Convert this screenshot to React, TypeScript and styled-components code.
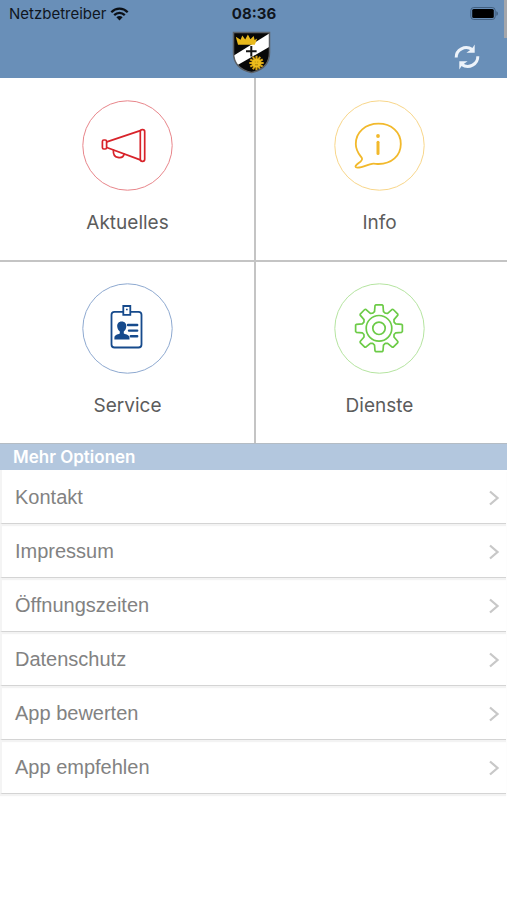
import React from "react";
import styled, { createGlobalStyle } from "styled-components";

const GlobalStyle = createGlobalStyle`
  *, *::before, *::after { box-sizing: border-box; }
  body {
    margin: 0;
    background: #fff;
    font-family: "Liberation Sans", Arial, sans-serif;
  }
`;

const Screen = styled.div`
  position: relative;
  min-height: 100vh;
`;

const Header = styled.header`
  height: 78px;
  background: #698fb8;
`;

const StatusBar = styled.div`
  display: grid;
  grid-template-columns: 1fr auto 1fr;
  align-items: center;
  height: 27px;
  padding: 0 8px 0 9px;
  font-family: Inter, sans-serif;
  font-size: 15px;
  color: #10161e;
`;

const Carrier = styled.div`
  display: flex;
  align-items: center;
  gap: 4px;
`;

const Clock = styled.time`
  font-weight: 700;
`;

const Battery = styled.svg`
  justify-self: end;
`;

const NavBar = styled.div`
  display: grid;
  grid-template-columns: 1fr auto 1fr;
  align-items: center;
  height: 50px;
  padding: 0 27px 0 23px;
`;

const Crest = styled.svg`
  grid-column: 2;
`;

const RefreshButton = styled.button`
  display: flex;
  justify-self: end;
  margin-top: 9px;
  padding: 0;
  border: 0;
  background: none;
  cursor: pointer;
`;

const ScrollThumb = styled.div`
  position: absolute;
  top: 0;
  right: 0;
  width: 3px;
  height: 38px;
  background: #a4a6aa;
`;

const TileGrid = styled.nav`
  display: grid;
  grid-template-columns: 254fr 251fr;
  gap: 2px;
  background: #c4c4c4;
  border-bottom: 1px solid #b4bcc4;
`;

const Tile = styled.a<{ $end?: boolean }>`
  display: flex;
  flex-direction: column;
  align-items: center;
  gap: 18px;
  height: ${(p) => (p.$end ? 181 : 182)}px;
  padding-top: ${(p) => (p.$end ? 21 : 22)}px;
  padding-left: 1px;
  background: #fff;
  color: #5c5c5c;
  font-family: Inter, sans-serif;
  font-size: 19px;
  line-height: 28px;
  text-decoration: none;

  &:nth-child(even) {
    padding-right: 5px;
  }
`;

const SectionTitle = styled.h2`
  margin: 0;
  padding-left: 13px;
  background: #b3c7de;
  color: #fff;
  font-family: Inter, sans-serif;
  font-size: 17px;
  font-weight: 600;
  line-height: 26px;
`;

const OptionList = styled.ul`
  margin: 0;
  padding: 0 1px 0 0;
  list-style: none;
`;

const OptionLink = styled.a`
  display: flex;
  align-items: center;
  justify-content: space-between;
  height: 54px;
  padding: 2px 6px 0 13px;
  border-left: 2px solid #f4f4f4;
  border-bottom: 1px solid #d4d4d4;
  box-shadow: 0 2px 1px #f3f3f3;
  color: #828282;
  font-size: 20px;
  text-decoration: none;
`;

const Circle = ({ color, children }: { color: string; children: React.ReactNode }) => (
  <svg width="91" height="91" viewBox="0 0 91 91" fill="none" aria-hidden="true">
    <circle cx="45.5" cy="45.5" r="44.7" stroke={color} />
    {children}
  </svg>
);

const MegaphoneIcon = () => (
  <Circle color="#e8868b">
    <g stroke="#d8232a" strokeWidth="1.7" strokeLinejoin="round" strokeLinecap="round">
      <rect x="20.4" y="40" width="4.2" height="9" rx="1.4" />
      <path d="M24.8 41.9 58.3 30.6M24.8 47.5 58.3 59.9" />
      <rect x="58.3" y="29.7" width="4.4" height="31.6" rx="2" />
      <path d="M31.4 50.2c-.3 4 1.5 6.7 4.5 7.2 3.3.6 5.6-.4 6.3-3.4" />
    </g>
  </Circle>
);

const InfoIcon = () => (
  <Circle color="#f8d68a">
    <path
      d="M44.5 23.700c13 0 22.300 8.500 22.300 20.300 0 11.800-9.300 20-22.300 20-2.300 0-4.500-.6-6.500-.2-4.500.9-9.200 3.900-14.700 3.900-2.300 0-2.300-1.600-.7-3 2.600-2.300 6.400-4.200 5.400-6.400-.9-2-6.200-6.300-6.200-14.300 0-11.800 9.700-20.300 22.700-20.300Z"
      stroke="#f2b92c"
      strokeWidth="1.8"
      strokeLinejoin="round"
    />
    <circle cx="44" cy="36" r="1.9" fill="#f2b92c" />
    <path d="M44 42.3v11.2" stroke="#f2b92c" strokeWidth="3" strokeLinecap="round" />
  </Circle>
);

const BadgeIcon = () => (
  <Circle color="#8ea9d0">
    <g stroke="#164a8c" strokeWidth="1.8">
      <rect x="29.5" y="28.8" width="30" height="35.7" rx="3" />
      <path d="M41.3 23h7v8.800h-7z" fill="#fff" />
      <path d="M44 26.5h1.7" strokeWidth="1.4" />
      <path d="M46 42h9.2M47 47.6h8.2M48.8 53.3h6.4" strokeWidth="2.4" strokeLinecap="round" />
    </g>
    <path
      d="M39.7 38.4c3.2 0 4.800 2.200 4.600 5.100-.2 2.300-1.100 3.900-2.500 4.900v2c2.800 1.100 5.500 1.400 5.700 4.300v1.900H32.400v-1.900c.2-2.900 2.800-3.200 5.400-4.300v-2c-1.400-1-2.400-2.600-2.600-4.900-.2-2.900 1.400-5.100 4.500-5.100Z"
      fill="#164a8c"
    />
  </Circle>
);

const toothOutline = [
  [-22.5, 16.3],
  [-15, 17.3],
  [-10, 23.0],
  [-7.8, 23.6],
  [7.8, 23.6],
  [10, 23.0],
  [15, 17.3],
];

const gearPoints = Array.from({ length: 8 }, (_, tooth) =>
  toothOutline.map(([degrees, radius]) => {
    const angle = ((tooth * 45 + degrees) * Math.PI) / 180;
    return `${(45 + radius * Math.sin(angle)).toFixed(2)},${(45.3 - radius * Math.cos(angle)).toFixed(2)}`;
  })
)
  .flat()
  .join(" ");

const GearIcon = () => (
  <Circle color="#b5e4a0">
    <g stroke="#6ccb47" strokeWidth="1.7" strokeLinejoin="round">
      <polygon points={gearPoints} />
      <circle cx="45" cy="45.3" r="12.8" />
      <circle cx="45" cy="45.3" r="6.2" />
    </g>
  </Circle>
);

const WifiIcon = () => (
  <svg width="19" height="14" viewBox="0 0 19 14" fill="none" aria-label="WLAN">
    <path
      d="M1.3 5.2c4.7-4.700 11.700-4.700 16.400 0M4.200 8.100c3.100-3 7.500-3 10.600 0"
      stroke="#0b1017"
      strokeWidth="2.3"
    />
    <path d="M6.4 10.2c1.800-1.700 4.400-1.700 6.200 0L9.500 13.400Z" fill="#0b1017" />
  </svg>
);

const BatteryIcon = () => (
  <Battery width="29" height="15" viewBox="0 0 29 15" aria-label="Batterie">
    <rect x=".8" y="1.500" width="24.400" height="12" rx="3" fill="none" stroke="#415f80" />
    <rect x="2.2" y="3" width="21.6" height="9" rx="1.5" fill="#000" />
    <path d="M26.3 5.200c2.200.6 2.200 4 0 4.600Z" fill="#415f80" />
  </Battery>
);

const CrestIcon = () => {
  const rays = Array.from({ length: 12 }, (_, i) => i * 30);
  return (
    <Crest width="39" height="43" viewBox="0 0 39 43" role="img" aria-label="Wappen">
      <defs>
        <clipPath id="shield">
          <path d="M1.500 1.500h36v20c0 10-6 17.500-18 20-12-2.500-18-10-18-20Z" />
        </clipPath>
      </defs>
      <g clipPath="url(#shield)">
        <path d="M0 0h39v43H0z" fill="#080808" />
        <path d="M39 1.500v13.500L3 35.500 0 25.500Z" fill="#fff" />
        <path d="M19.300 15v10.500M14 20.200h10.600" stroke="#151515" strokeWidth="2" />
        <path d="M6 13.800 3.800 5.700l4.800 3.100 1.700-4.400 2.900 4.100 2.700-4.900 2.500 4.700 3.300-3.300.9 4.100 2.600-1.600-2.400 6.300Z" fill="#e8b91c" />
        <g stroke="#d9a514" strokeWidth="2.1">
          {rays.map((angle) => (
            <path key={angle} d="M24.500 28v-3.200" transform={`rotate(${angle} 24.500 32)`} />
          ))}
        </g>
        <circle cx="24.5" cy="32" r="4.6" fill="#edbd1c" />
        <path d="M22.800 31h.8M25.400 31h.8M23 33.800h3" stroke="#96700c" strokeWidth=".8" />
      </g>
      <path
        d="M1.500 1.500h36v20c0 10-6 17.500-18 20-12-2.500-18-10-18-20Z"
        fill="none"
        stroke="#5b6066"
        strokeWidth="1.5"
      />
    </Crest>
  );
};

const RefreshIcon = () => (
  <svg width="26" height="26" viewBox="0 0 26 26" fill="none" aria-hidden="true">
    <path
      d="M2.200 13.500C2 6 11 .6 18.300 5.600M23.800 12.300C24 20 15 25.500 7.700 20.400"
      stroke="#edf3fa"
      strokeWidth="3"
    />
    <path d="M20.700.5v8.300h-8.300l3.200-2.200 3-2.800ZM5.300 25.500v-8.300h8.300l-3.200 2.200-3 2.800Z" fill="#edf3fa" />
  </svg>
);

const Chevron = () => (
  <svg width="12" height="16" viewBox="0 0 12 16" fill="none" aria-hidden="true">
    <path d="m2 1.500 7.500 6.500L2 14.500" stroke="#c8c8c8" strokeWidth="2.3" />
  </svg>
);

const options = ["Kontakt", "Impressum", "Öffnungszeiten", "Datenschutz", "App bewerten", "App empfehlen"];

export default function App() {
  return (
    <Screen>
      <GlobalStyle />
      <Header>
        <StatusBar>
          <Carrier>
            Netzbetreiber
            <WifiIcon />
          </Carrier>
          <Clock>08:36</Clock>
          <BatteryIcon />
        </StatusBar>
        <NavBar>
          <CrestIcon />
          <RefreshButton type="button" aria-label="Aktualisieren">
            <RefreshIcon />
          </RefreshButton>
        </NavBar>
      </Header>
      <ScrollThumb />
      <main>
        <TileGrid>
          <Tile href="#aktuelles">
            <MegaphoneIcon />
            Aktuelles
          </Tile>
          <Tile href="#info">
            <InfoIcon />
            Info
          </Tile>
          <Tile href="#service" $end>
            <BadgeIcon />
            Service
          </Tile>
          <Tile href="#dienste" $end>
            <GearIcon />
            Dienste
          </Tile>
        </TileGrid>
        <SectionTitle>Mehr Optionen</SectionTitle>
        <OptionList>
          {options.map((label) => (
            <li key={label}>
              <OptionLink href="#optionen">
                {label}
                <Chevron />
              </OptionLink>
            </li>
          ))}
        </OptionList>
      </main>
    </Screen>
  );
}
